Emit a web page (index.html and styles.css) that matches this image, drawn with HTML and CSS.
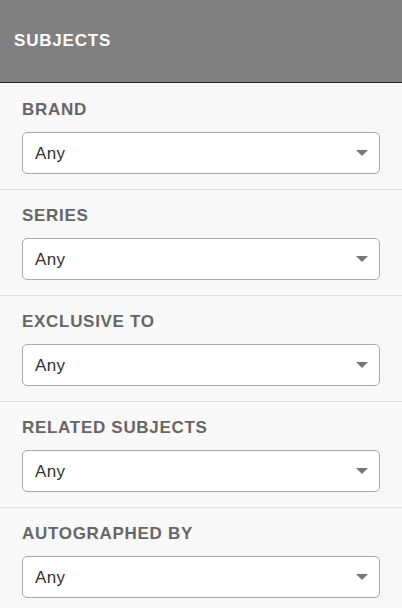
FILE: index.html
```html
<!DOCTYPE html>
<html>
<head>
<meta charset="utf-8">
<link rel="stylesheet" href="styles.css">
</head>
<body>
<div class="panel">
  <div class="panel-header">SUBJECTS</div>
  <div class="filter">
    <div class="filter-label">BRAND</div>
    <div class="select"><span class="select-value">Any</span><svg class="caret" width="12" height="6" viewBox="0 0 12 6"><polygon points="0,0 12,0 6,6"/></svg></div>
  </div>
  <div class="filter">
    <div class="filter-label">SERIES</div>
    <div class="select"><span class="select-value">Any</span><svg class="caret" width="12" height="6" viewBox="0 0 12 6"><polygon points="0,0 12,0 6,6"/></svg></div>
  </div>
  <div class="filter">
    <div class="filter-label">EXCLUSIVE TO</div>
    <div class="select"><span class="select-value">Any</span><svg class="caret" width="12" height="6" viewBox="0 0 12 6"><polygon points="0,0 12,0 6,6"/></svg></div>
  </div>
  <div class="filter">
    <div class="filter-label">RELATED SUBJECTS</div>
    <div class="select"><span class="select-value">Any</span><svg class="caret" width="12" height="6" viewBox="0 0 12 6"><polygon points="0,0 12,0 6,6"/></svg></div>
  </div>
  <div class="filter">
    <div class="filter-label">AUTOGRAPHED BY</div>
    <div class="select"><span class="select-value">Any</span><svg class="caret" width="12" height="6" viewBox="0 0 12 6"><polygon points="0,0 12,0 6,6"/></svg></div>
  </div>
</div>
</body>
</html>
```
FILE: styles.css
```css
html, body {
  margin: 0;
  padding: 0;
  background: #f8f8f8;
}
body {
  font-family: "Liberation Sans", Arial, sans-serif;
  width: 402px;
  height: 608px;
  overflow: hidden;
}
.panel {
  display: flex;
  flex-direction: column;
}
.panel-header {
  height: 83px;
  box-sizing: border-box;
  background: #808080;
  border-bottom: 1px solid #222;
  margin-bottom: 1px;
  color: #fff;
  font-weight: bold;
  font-size: 17px;
  letter-spacing: 0.8px;
  padding: 0 0 1px 14px;
  display: flex;
  align-items: center;
}
.filter {
  padding: 16px 22px 15px;
  border-bottom: 1px solid #dedede;
  display: flex;
  flex-direction: column;
  gap: 12px;
}
.filter-label {
  font-size: 17px;
  line-height: 20px;
  font-weight: bold;
  color: #666;
  letter-spacing: 0.7px;
}
.select {
  height: 42px;
  box-sizing: border-box;
  background: #fff;
  border: 1px solid #aaa;
  border-radius: 5px;
  display: flex;
  align-items: center;
  justify-content: space-between;
  padding: 0 11px 0 12px;
}
.select-value {
  font-size: 17px;
  color: #333;
  letter-spacing: 0.4px;
  padding-top: 2px;
}
.caret {
  fill: #777;
  display: block;
}
```
